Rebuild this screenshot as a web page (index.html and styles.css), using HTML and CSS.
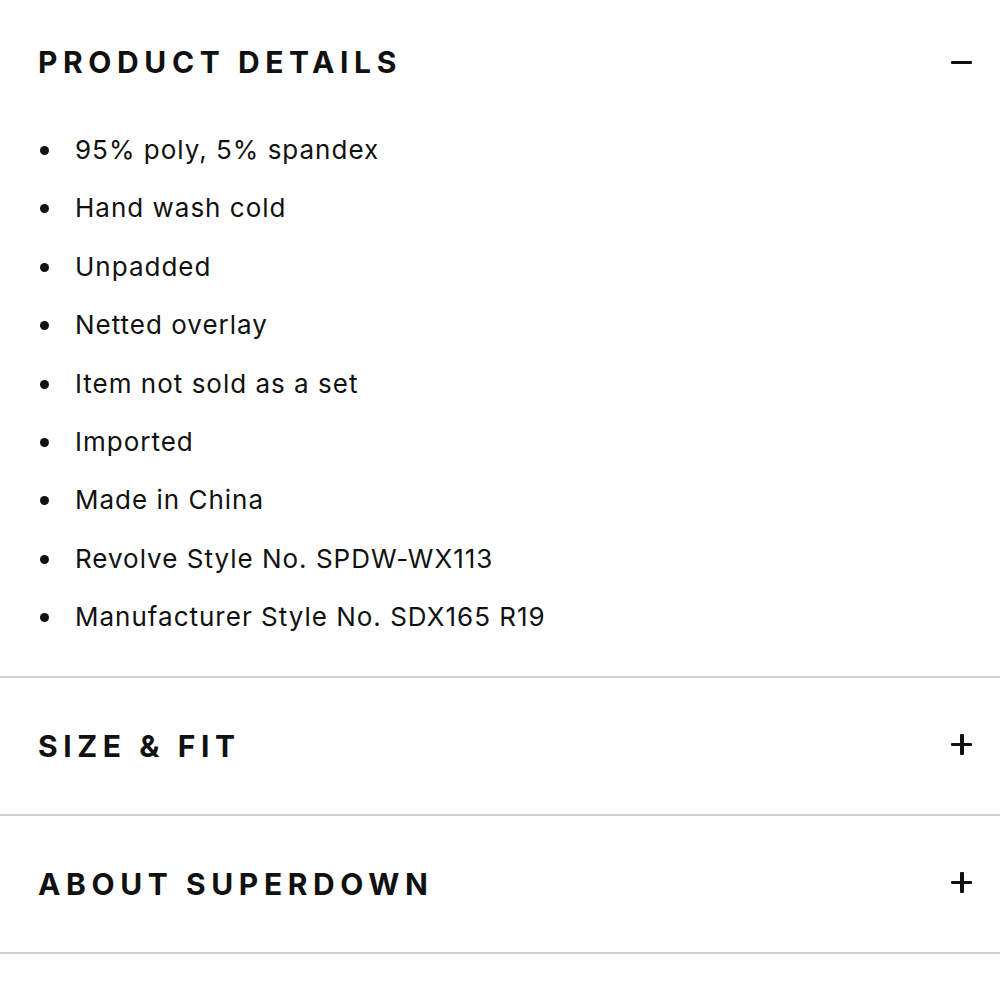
FILE: index.html
```html
<!DOCTYPE html>
<html>
<head>
<meta charset="utf-8">
<link rel="stylesheet" href="styles.css">
</head>
<body>
<div class="accordion">
  <section class="panel open">
    <div class="panel-head first">
      <h2 class="panel-title">PRODUCT DETAILS</h2>
      <span class="icon minus"></span>
    </div>
    <ul class="details">
      <li>95% poly, 5% spandex</li>
      <li>Hand wash cold</li>
      <li>Unpadded</li>
      <li>Netted overlay</li>
      <li>Item not sold as a set</li>
      <li>Imported</li>
      <li>Made in China</li>
      <li>Revolve Style No. SPDW-WX113</li>
      <li>Manufacturer Style No. SDX165 R19</li>
    </ul>
  </section>
  <section class="panel">
    <div class="panel-head">
      <h2 class="panel-title">SIZE &amp; FIT</h2>
      <span class="icon plus"></span>
    </div>
  </section>
  <section class="panel">
    <div class="panel-head">
      <h2 class="panel-title">ABOUT SUPERDOWN</h2>
      <span class="icon plus"></span>
    </div>
  </section>
</div>
</body>
</html>
```

FILE: styles.css
```css
html, body {
  margin: 0;
  padding: 0;
  background: #ffffff;
}

body {
  font-family: "Inter", "Liberation Sans", sans-serif;
  color: #111111;
  width: 1000px;
  height: 1000px;
  overflow: hidden;
}

.accordion {
  display: flex;
  flex-direction: column;
}

.panel {
  border-bottom: 2px solid #cfcfcf;
}

.panel-head {
  height: 136px;
  display: flex;
  align-items: center;
  justify-content: space-between;
  padding: 0 28px 0 38px;
  box-sizing: border-box;
}

.panel-head.first {
  height: 121px;
  padding-top: 3px;
}

.panel-title {
  margin: 0;
  font-size: 30px;
  font-weight: 700;
  letter-spacing: 5.6px;
  line-height: 1;
}

.icon {
  position: relative;
  width: 21px;
  height: 21px;
  display: block;
}

.icon::before,
.icon::after {
  content: "";
  position: absolute;
  background: #111111;
  border-radius: 1px;
}

.icon::before {
  left: 0;
  right: 0;
  top: 9px;
  height: 3.5px;
}

.plus {
  margin-top: -3px;
}

.plus::after {
  top: 0;
  bottom: 0;
  left: 9px;
  width: 3.5px;
}

.details {
  list-style: none;
  margin: 0;
  padding: 0 0 29px 0;
}

.details li {
  position: relative;
  height: 58.4px;
  line-height: 58.4px;
  padding-left: 75px;
  font-size: 26px;
  font-weight: 400;
  letter-spacing: 1px;
}

.details li::before {
  content: "";
  position: absolute;
  left: 40px;
  top: 25px;
  width: 9px;
  height: 9px;
  border-radius: 50%;
  background: #111111;
}
```
